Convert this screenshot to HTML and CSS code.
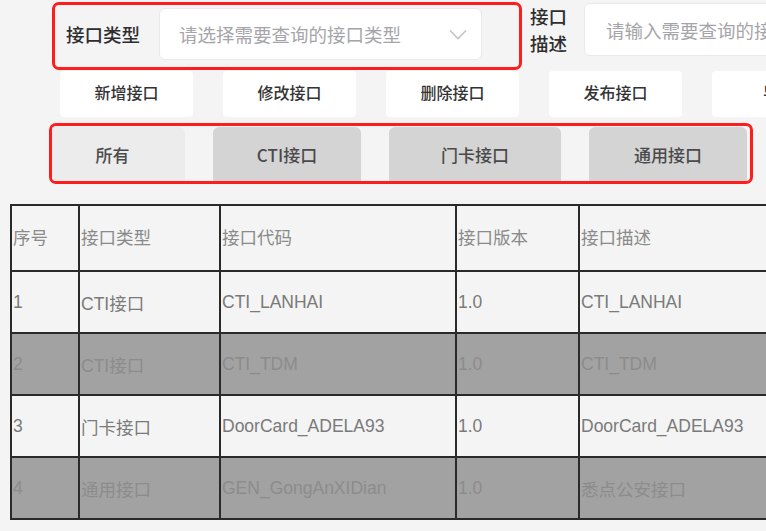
FILE: index.html
```html
<!DOCTYPE html>
<html lang="zh">
<head>
<meta charset="utf-8">
<link rel="stylesheet" href="styles.css">
</head>
<body>
<div class="page">
  <div class="filters">
    <div class="field mark">
      <span class="label">接口类型</span>
      <div class="select">
        <span class="placeholder">请选择需要查询的接口类型</span>
        <svg class="chev" width="18" height="11" viewBox="0 0 18 11"><polyline points="1,1.5 9,9.5 17,1.5" fill="none" stroke="#c2c4c8" stroke-width="1.6"/></svg>
      </div>
    </div>
    <div class="field desc">
      <span class="label two">接口<br>描述</span>
      <div class="input"><span class="placeholder">请输入需要查询的接口描述</span></div>
    </div>
  </div>

  <div class="actions">
    <button class="btn">新增接口</button>
    <button class="btn">修改接口</button>
    <button class="btn">删除接口</button>
    <button class="btn">发布接口</button>
    <button class="btn wide">导出接口</button>
  </div>

  <div class="tabs mark">
    <button class="tab all">所有</button>
    <button class="tab w148">CTI接口</button>
    <button class="tab w172">门卡接口</button>
    <button class="tab w158">通用接口</button>
  </div>

  <table class="grid">
    <colgroup>
      <col class="c1"><col class="c2"><col class="c3"><col class="c4"><col class="c5">
    </colgroup>
    <thead>
      <tr><th>序号</th><th>接口类型</th><th>接口代码</th><th>接口版本</th><th>接口描述</th></tr>
    </thead>
    <tbody>
      <tr><td>1</td><td>CTI接口</td><td>CTI_LANHAI</td><td>1.0</td><td>CTI_LANHAI</td></tr>
      <tr class="dark"><td>2</td><td>CTI接口</td><td>CTI_TDM</td><td>1.0</td><td>CTI_TDM</td></tr>
      <tr><td>3</td><td>门卡接口</td><td>DoorCard_ADELA93</td><td>1.0</td><td>DoorCard_ADELA93</td></tr>
      <tr class="dark"><td>4</td><td>通用接口</td><td>GEN_GongAnXIDian</td><td>1.0</td><td>悉点公安接口</td></tr>
    </tbody>
  </table>
</div>
</body>
</html>
```
FILE: styles.css
```css
html, body {
  margin: 0;
  padding: 0;
  overflow: hidden;
  background: #f4f4f4;
}
body {
  width: 766px;
  height: 531px;
  font-family: "Noto Sans CJK SC", "Liberation Sans", sans-serif;
  color: #333;
}
.page {
  width: 766px;
  overflow: hidden;
}
.mark {
  border: 3px solid #ff1c1c;
  border-radius: 7px;
  box-sizing: border-box;
}
.filters {
  display: flex;
  padding: 2px 0 0 52px;
  height: 68px;
}
.field {
  display: flex;
  align-items: flex-start;
  flex: none;
}
.field.mark {
  width: 470px;
  height: 68px;
  padding: 3px 0 0 11px;
}
.label {
  font-size: 18.5px;
  font-weight: 500;
  color: #2e2e2e;
  line-height: 52px;
  white-space: nowrap;
}
.label.two {
  line-height: 27px;
  margin-top: 1px;
}
.select {
  margin-left: 19px;
  width: 323px;
  height: 52px;
  box-sizing: border-box;
  background: #fff;
  border: 1px solid #e8e9ec;
  border-radius: 6px;
  display: flex;
  align-items: center;
  justify-content: space-between;
  padding: 0 14px 0 19px;
}
.placeholder {
  font-size: 18.5px;
  color: #a5a5a9;
  white-space: nowrap;
  line-height: 24px;
}
.chev {
  display: block;
  margin-top: 1px;
}
.desc {
  margin-left: 8px;
}
.input {
  margin-left: 17px;
  margin-top: 1px;
  width: 300px;
  height: 53px;
  box-sizing: border-box;
  background: #fff;
  border: 1px solid #e8e9ec;
  border-radius: 6px;
  display: flex;
  align-items: center;
  padding-left: 21px;
  overflow: hidden;
}
.actions {
  display: flex;
  gap: 30px;
  padding-left: 60px;
  margin-top: 1px;
}
.btn {
  flex: none;
  width: 133px;
  height: 46px;
  border: none;
  border-radius: 4px;
  background: #fff;
  font-family: "Noto Sans CJK SC", sans-serif;
  font-size: 16px;
  font-weight: 500;
  color: #333;
  padding: 0 0 5px 0;
}
.btn.wide { width: 166px; }
.tabs {
  display: flex;
  gap: 28px;
  margin: 6px 0 0 49px;
  width: 704px;
  height: 61px;
  padding: 1px 0 0 0;
  overflow: hidden;
}
.tab {
  flex: none;
  width: 148px;
  height: 60px;
  border: none;
  border-radius: 6px 6px 0 0;
  background: #d4d4d4;
  font-family: "Noto Sans CJK SC", "Liberation Sans", sans-serif;
  font-size: 17px;
  font-weight: 500;
  color: #4a4a4a;
  padding: 0 0 6px 0;
}
.tab.all {
  width: 145px;
  margin-left: -12px;
  background: #ececec;
  border-radius: 0 6px 0 0;
}
.tab.w172 { width: 172px; }
.tab.w158 { width: 158px; }

.grid {
  margin: 20px 0 0 10px;
  border-collapse: collapse;
  table-layout: fixed;
  width: 820px;
  border: 2px solid #2a2a2a;
  font-family: "Liberation Sans", "Noto Sans CJK SC", sans-serif;
  font-size: 17.5px;
}
.c1 { width: 68px; }
.c2 { width: 141px; }
.c3 { width: 236px; }
.c4 { width: 123px; }
.c5 { width: 252px; }
.grid th, .grid td {
  border: 2px solid #2a2a2a;
  text-align: left;
  padding: 0 0 0 1px;
  white-space: nowrap;
  overflow: hidden;
  font-weight: 400;
  vertical-align: middle;
}
.grid th {
  height: 61px;
  color: #8a8a8a;
  background: #f4f4f4;
  padding-bottom: 3px;
}
.grid td {
  height: 60px;
  color: #7a7a7a;
  background: #f4f4f4;
}
.grid tr.dark td {
  background: #a2a2a2;
  color: #8c8c8c;
}
```
